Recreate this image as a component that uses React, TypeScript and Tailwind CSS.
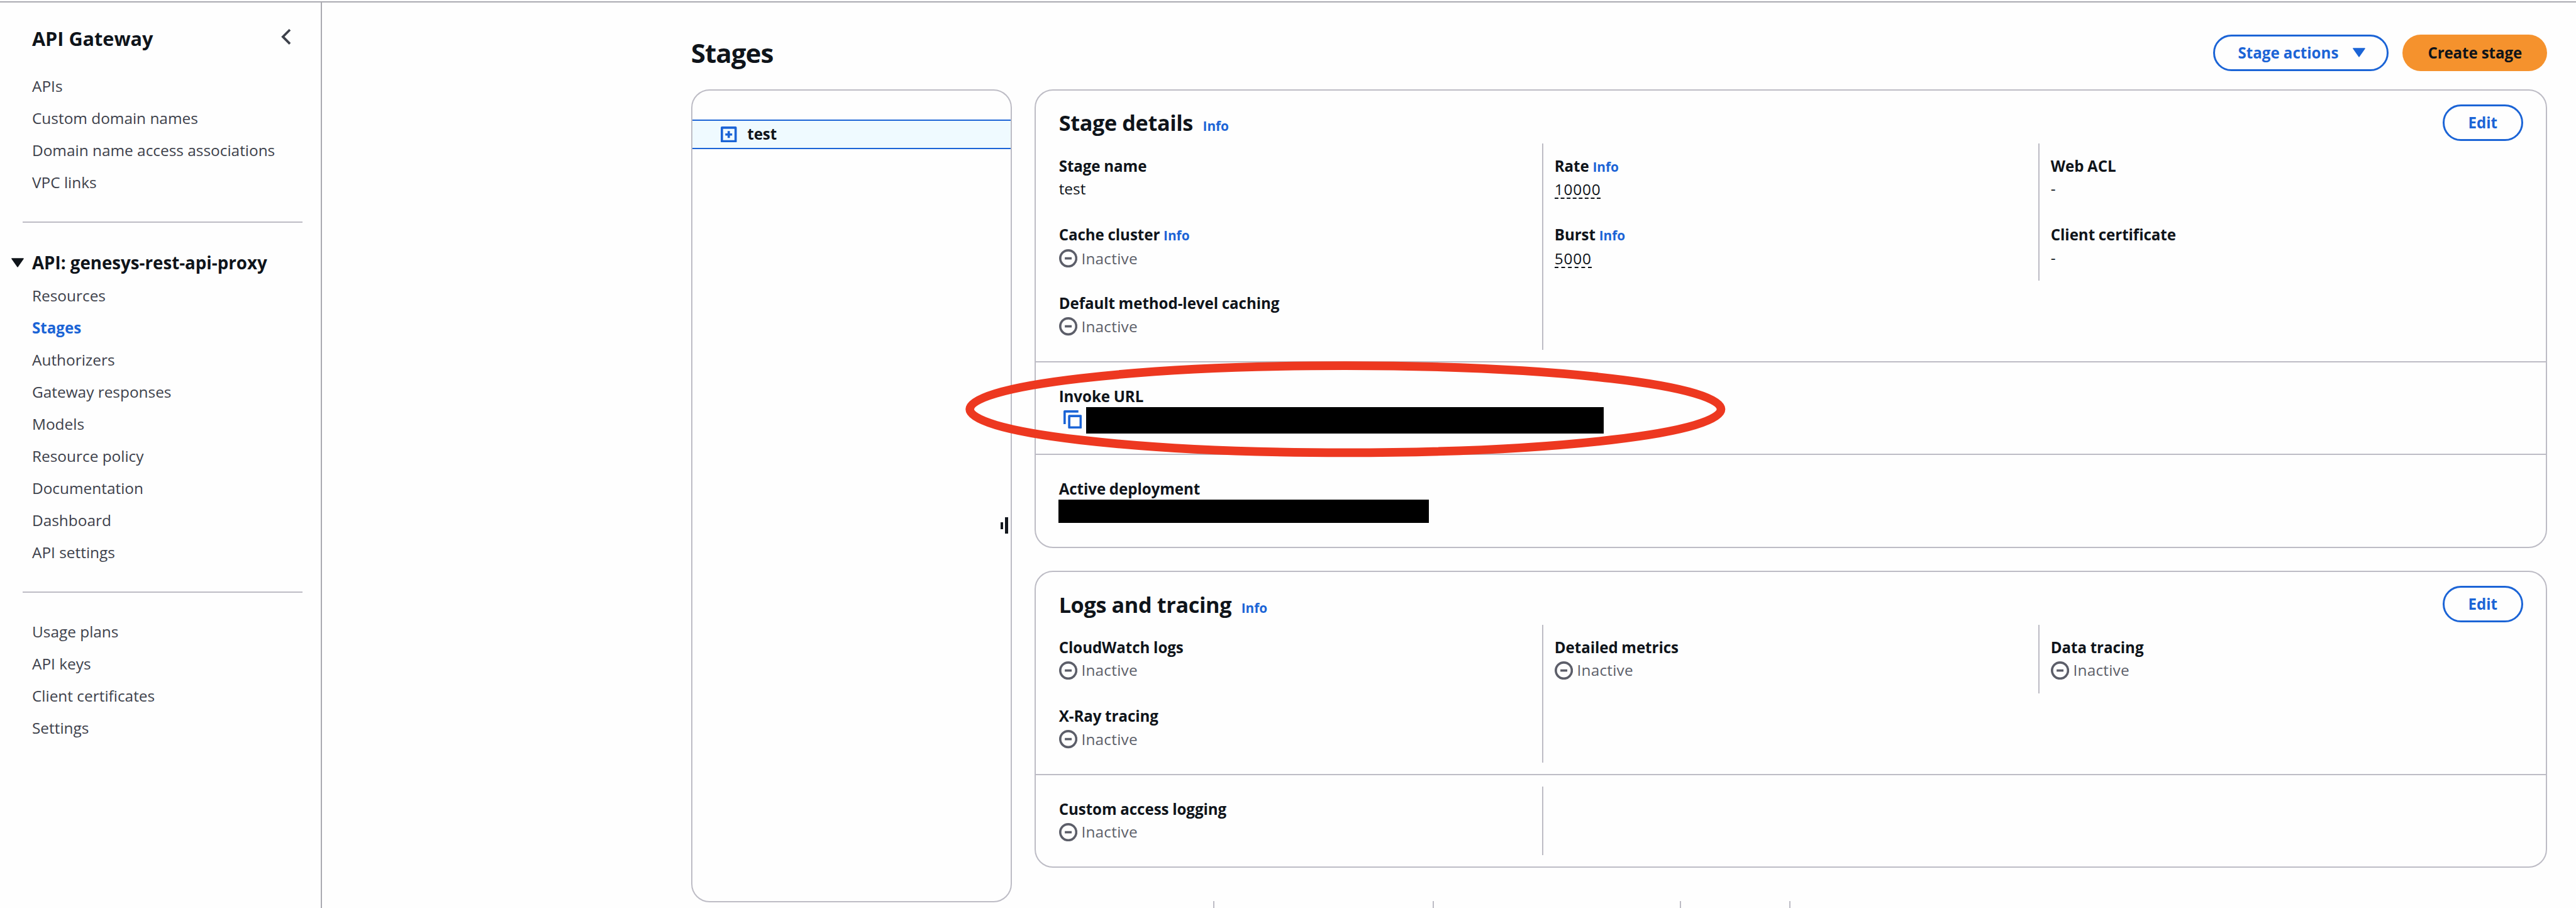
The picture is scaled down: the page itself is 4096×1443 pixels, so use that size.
import type { ReactNode } from "react";

const topLinks = ["APIs", "Custom domain names", "Domain name access associations", "VPC links"];
const apiLinks = [
  "Resources",
  "Stages",
  "Authorizers",
  "Gateway responses",
  "Models",
  "Resource policy",
  "Documentation",
  "Dashboard",
  "API settings",
];
const bottomLinks = ["Usage plans", "API keys", "Client certificates", "Settings"];

function NavList({ items, active }: { items: string[]; active?: string }) {
  return (
    <ul className="pl-[51px]">
      {items.map((item) => (
        <li
          key={item}
          className={
            item === active
              ? "h-[51.02px] text-[24.1px] leading-[51.02px] font-bold text-[#1b64d6]"
              : "h-[51.02px] text-[24.4px] leading-[51.02px] font-[460] text-[#3d414b]"
          }
        >
          {item}
        </li>
      ))}
    </ul>
  );
}

function Sidebar() {
  return (
    <nav className="w-[512px] shrink-0 border-r-2 border-[#aaaab1]">
      <div className="flex h-[106.8px] items-start justify-between pt-[38.5px] pr-[47px] pl-[51px]">
        <h2 className="text-[30.6px] leading-[36px] font-bold">API Gateway</h2>
        <svg className="mt-[2px] h-[27px] w-[16px]" viewBox="0 0 16 27" fill="none">
          <path d="M14 2.2 2.8 13.4 14 24.6" stroke="#3d414b" strokeWidth="3.7" />
        </svg>
      </div>
      <NavList items={topLinks} />
      <hr className="mt-[37px] ml-[36.4px] w-[444.6px] border-t-2 border-[#bdbcc5]" />
      <div className="mt-[45.4px] flex h-[44.8px] items-start pl-[18px]">
        <svg className="mt-[10.6px] h-[15px] w-[20px]" viewBox="0 0 20 15">
          <path d="M1 1h18L10 13.8z" fill="#0f141a" stroke="#0f141a" strokeWidth="1.6" strokeLinejoin="round" />
        </svg>
        <h3 className="ml-[13px] text-[27.7px] leading-[36px] font-bold whitespace-nowrap">
          API: genesys-rest-api-proxy
        </h3>
      </div>
      <NavList items={apiLinks} active="Stages" />
      <hr className="mt-[36.8px] mb-[35.9px] ml-[36.4px] w-[444.6px] border-t-2 border-[#bdbcc5]" />
      <NavList items={bottomLinks} />
    </nav>
  );
}

function Info() {
  return <a className="text-[20.8px] font-bold tracking-normal text-[#1b64d6]">Info</a>;
}

function EditButton() {
  return (
    <button className="mt-[21.7px] h-[58.3px] w-[128.5px] rounded-[30px] border-[3.6px] border-[#1b64d6] text-[24.1px] font-bold text-[#1b64d6]">
      Edit
    </button>
  );
}

function PanelHeader({ title }: { title: string }) {
  return (
    <header className="flex h-[83.7px] items-start justify-between pr-[36.3px] pl-[36.4px]">
      <h2 className="mt-[28.2px] text-[34.2px] leading-[46px] font-bold tracking-[-0.35px]">
        {title}
        <span className="ml-[15.5px]">
          <Info />
        </span>
      </h2>
      <EditButton />
    </header>
  );
}

function Inactive() {
  return (
    <span className="flex items-center gap-[6.6px] tracking-[0.2px] text-[#5c5e69]">
      <svg className="h-[29.2px] w-[29.2px]" viewBox="0 0 32 32" fill="none" stroke="#5c5e69" strokeWidth="4">
        <circle cx="16" cy="16" r="14" />
        <path d="M10 16h12" />
      </svg>
      Inactive
    </span>
  );
}

function Field({ label, info, children }: { label: string; info?: boolean; children?: ReactNode }) {
  return (
    <div className="h-[109.3px] pt-[18px]">
      <div className="text-[24.1px] leading-[36.44px] font-bold tracking-[-0.05px] whitespace-nowrap [word-spacing:-0.5px]">
        {label} {info && <Info />}
      </div>
      <div className="h-[36.44px] text-[24.4px] leading-[36.44px] font-[440]">{children}</div>
    </div>
  );
}

function Limit({ value }: { value: string }) {
  return (
    <span className="inline-block h-[33px] border-b-2 border-dashed border-[#0f141a] tracking-[0.8px]">{value}</span>
  );
}

function CopyIcon() {
  return (
    <svg
      className="mt-[5.5px] h-[29.2px] w-[29.2px] shrink-0"
      viewBox="0 0 32 32"
      fill="none"
      stroke="#1b64d6"
      strokeWidth="4"
      strokeLinejoin="round"
    >
      <path d="M26 2H2v22" />
      <path d="M10 10h20v20H10z" />
    </svg>
  );
}

const columns = "grid grid-cols-[804.3px_789px_1fr]";
const panel = "rounded-[29.2px] border-2 border-[#bdbcc5]";
const divided = "border-l-2 border-[#bdbcc5] pl-[18.2px]";

function StageDetails() {
  return (
    <section className={`${panel} h-[728.9px]`}>
      <div className="h-[431.6px] border-b-2 border-[#bdbcc5]">
        <PanelHeader title="Stage details" />
        <div className={`${columns} items-start`}>
          <div className="pl-[36.4px]">
            <Field label="Stage name">test</Field>
            <Field label="Cache cluster" info>
              <Inactive />
            </Field>
            <Field label="Default method-level caching">
              <Inactive />
            </Field>
          </div>
          <div className={`${divided} h-[328px]`}>
            <Field label="Rate" info>
              <Limit value="10000" />
            </Field>
            <Field label="Burst" info>
              <Limit value="5000" />
            </Field>
          </div>
          <div className={divided}>
            <Field label="Web ACL">-</Field>
            <Field label="Client certificate">-</Field>
          </div>
        </div>
      </div>
      <div className="h-[147.6px] border-b-2 border-[#bdbcc5] pt-[18.2px] pl-[36.4px]">
        <Field label="Invoke URL">
          <div className="-mt-[1.5px] flex pl-[7.3px]">
            <CopyIcon />
            <div className="ml-[7.2px] h-[42px] w-[823px] bg-black" />
          </div>
        </Field>
      </div>
      <div className="pt-[18.2px] pl-[36.4px]">
        <Field label="Active deployment">
          <div className="-mt-[1.5px] -ml-px h-[36.5px] w-[589.5px] bg-black" />
        </Field>
      </div>
    </section>
  );
}

function LogsAndTracing() {
  return (
    <section className={`${panel} h-[472px]`}>
      <div className="h-[322.3px] border-b-2 border-[#bdbcc5]">
        <PanelHeader title="Logs and tracing" />
        <div className={`${columns} items-start`}>
          <div className="pl-[36.4px]">
            <Field label="CloudWatch logs">
              <Inactive />
            </Field>
            <Field label="X-Ray tracing">
              <Inactive />
            </Field>
          </div>
          <div className={`${divided} h-[218.6px]`}>
            <Field label="Detailed metrics">
              <Inactive />
            </Field>
          </div>
          <div className={divided}>
            <Field label="Data tracing">
              <Inactive />
            </Field>
          </div>
        </div>
      </div>
      <div className={`${columns} pt-[18.2px]`}>
        <div className="pl-[36.4px]">
          <Field label="Custom access logging">
            <Inactive />
          </Field>
        </div>
        <div className={divided} />
      </div>
    </section>
  );
}

function StageTree() {
  return (
    <aside className={`${panel} relative h-[1291.9px] w-[510.2px] shrink-0 pt-[45.5px]`}>
      <div className="flex h-[47.4px] items-center border-y-2 border-[#1b64d6] bg-[#effaff] pl-[45.6px]">
        <svg className="h-[25.5px] w-[25.5px]" viewBox="0 0 28 28" fill="none" stroke="#1b64d6" strokeWidth="4">
          <path d="M2 2h24v24H2z" strokeLinejoin="round" />
          <path d="M8 14h12M14 8v12" />
        </svg>
        <span className="ml-[16.4px] text-[24.1px] font-bold">test</span>
      </div>
      {/* Drag handle on the panel's edge */}
      <div className="absolute top-[678px] right-[4px] flex items-center gap-[3.6px]">
        <span className="h-[11px] w-[4px] bg-[#14181e]" />
        <span className="h-[26px] w-[4.4px] bg-[#14181e]" />
      </div>
    </aside>
  );
}

function Highlight() {
  return (
    <svg className="pointer-events-none absolute top-[569.5px] left-[1535px] h-[160px] w-[1212px]" viewBox="0 0 1212 160">
      <ellipse cx="604.3" cy="80.3" rx="597.2" ry="69.1" fill="none" stroke="#ed3820" strokeWidth="13.7" />
    </svg>
  );
}

export default function App() {
  return (
    <div className="relative h-[1443px] w-[4096px] overflow-hidden bg-[#fefefe] pt-[2px] font-['Open_Sans','Noto_Sans',sans-serif] text-[#0f141a]">
      <div className="flex h-[1441px] border-t-2 border-[#aaaab1]">
        <Sidebar />
        <main className="pt-[50.7px] pl-[586.7px]">
          <div className="flex h-[87.4px] w-[2951.8px] items-start">
            <h1 className="mt-[2.5px] text-[42px] leading-[54px] font-bold tracking-[-0.9px]">Stages</h1>
            <button className="ml-auto flex h-[58.3px] w-[278.8px] items-center justify-between rounded-[30px] border-[3.6px] border-[#1b64d6] pr-[34px] pl-[36.2px] text-[24.1px] font-bold text-[#1b64d6]">
              Stage actions
              <svg className="h-[15px] w-[20px]" viewBox="0 0 20 15">
                <path d="M1 1h18L10 13.8z" fill="#1b64d6" stroke="#1b64d6" strokeWidth="1.6" strokeLinejoin="round" />
              </svg>
            </button>
            <button className="ml-[21.9px] h-[58.3px] w-[230.5px] rounded-[30px] bg-[#f5922d] text-[24.1px] font-bold tracking-[-0.1px]">
              Create stage
            </button>
          </div>
          <div className="flex gap-[36.4px]">
            <StageTree />
            <div className="flex w-[2405.1px] shrink-0 flex-col">
              <StageDetails />
              <div className="h-[36.4px] shrink-0" />
              <LogsAndTracing />
              <div className="mt-[52.8px] flex h-[12px] divide-x-2 divide-[#bdbcc5]">
                <span className="w-[286px]" />
                <span className="w-[349px]" />
                <span className="w-[392.8px]" />
                <span className="w-[173.9px]" />
                <span />
              </div>
            </div>
          </div>
        </main>
      </div>
      <Highlight />
    </div>
  );
}
